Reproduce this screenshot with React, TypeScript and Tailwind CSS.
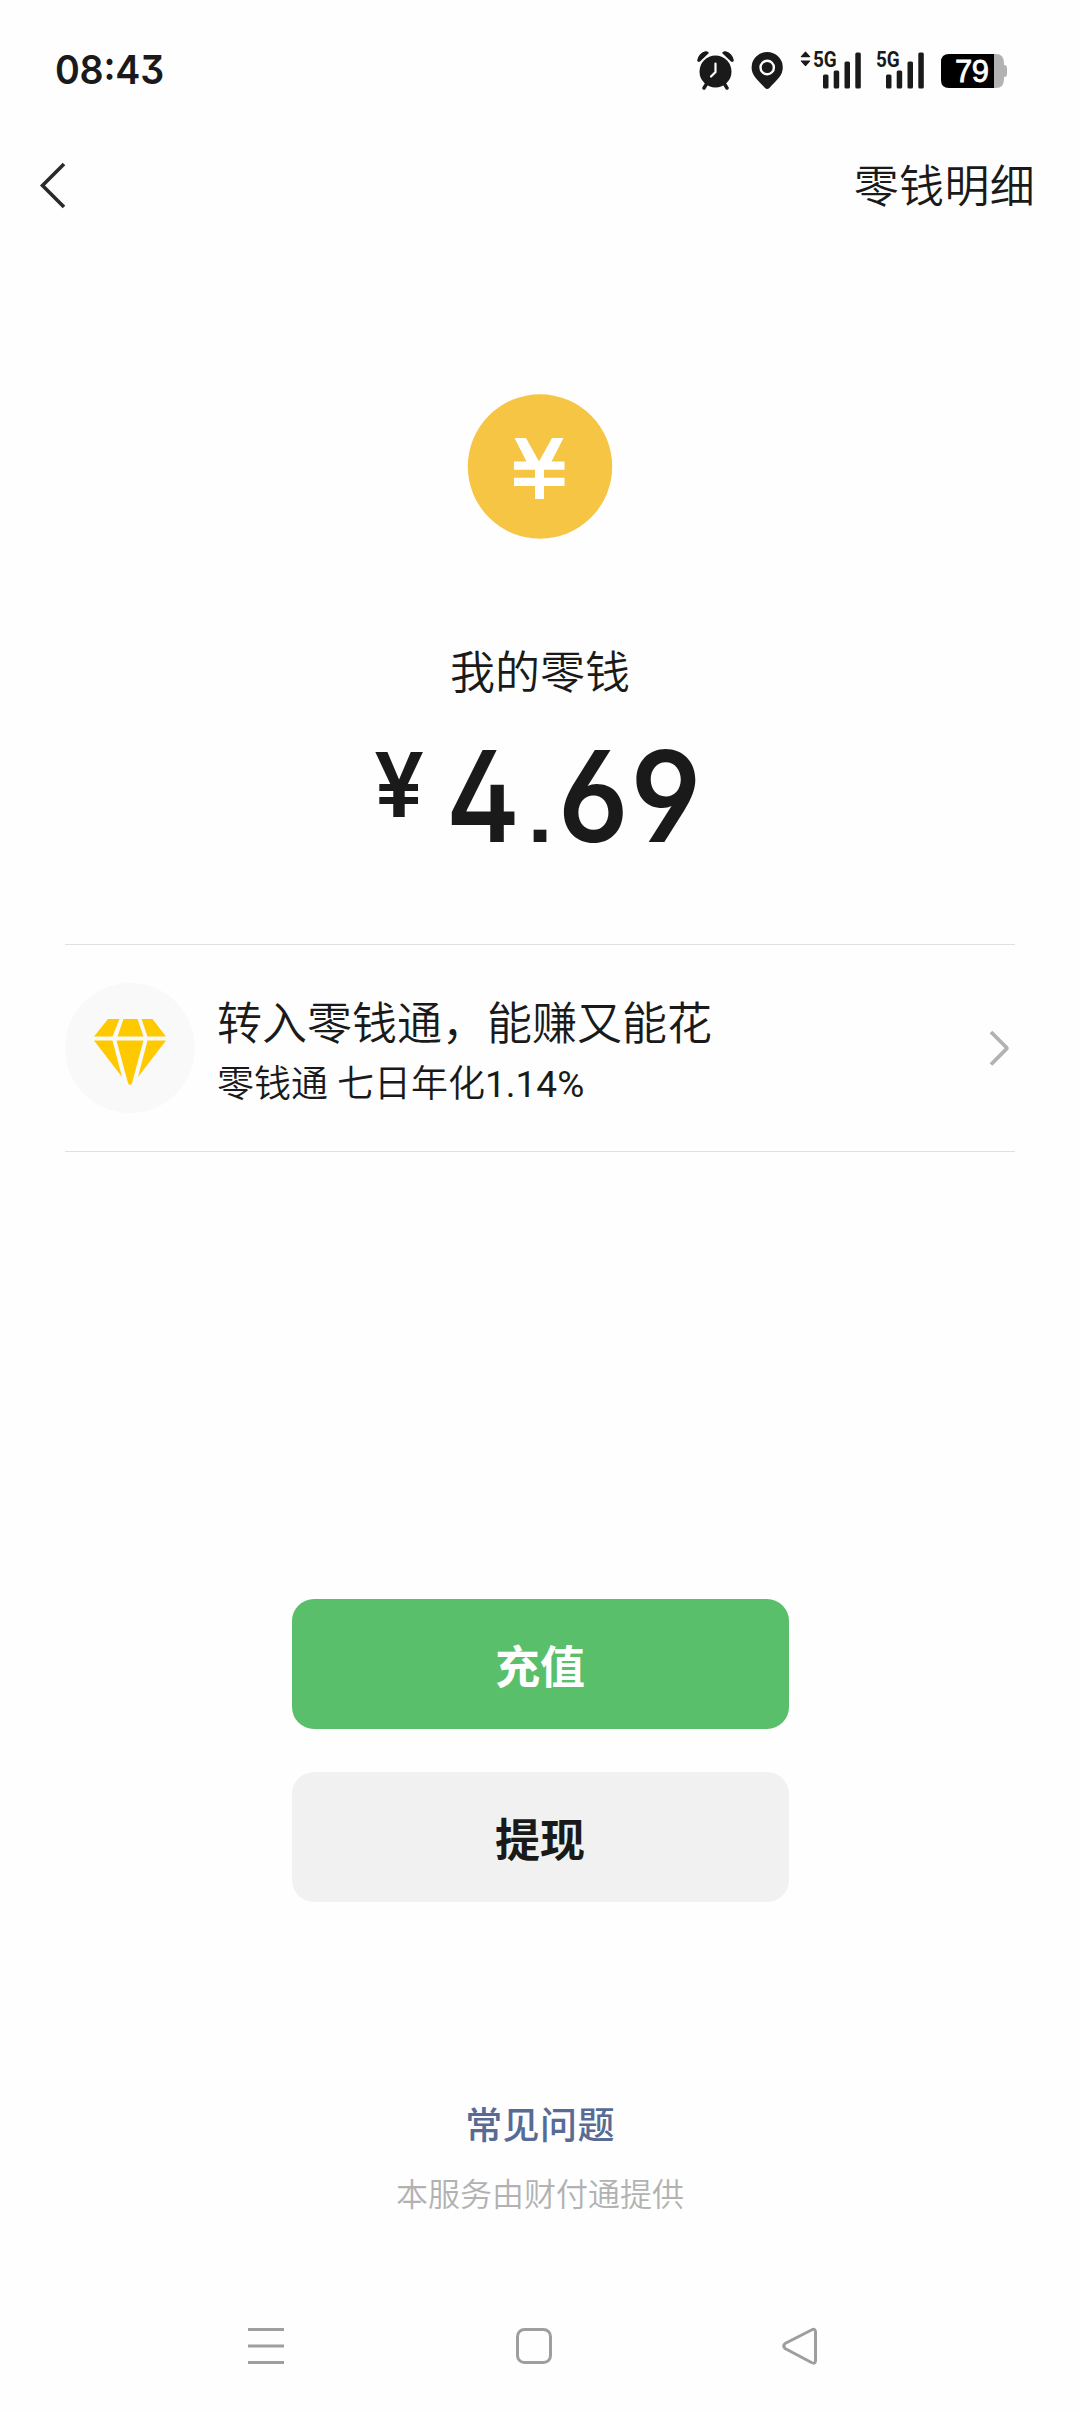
function SignalBars() {
  return (
    <svg width="38" height="37" viewBox="0 0 38 37" fill="#1a1a1a">
      <rect x="0" y="22.5" width="5.5" height="14" rx="1.5" />
      <rect x="10.7" y="18.5" width="5.5" height="18" rx="1.5" />
      <rect x="21.5" y="9.5" width="5.5" height="27" rx="1.5" />
      <rect x="32.3" y="0.5" width="5.5" height="36" rx="1.5" />
    </svg>
  )
}

function StatusBar() {
  return (
    <header className="h-[140px] pl-[55px] pr-[73px] flex justify-between items-start">
      <span className="mt-[45px] leading-[50px] text-[40px] font-semibold tracking-[-0.2px] origin-left scale-x-[.94] font-['Inter',sans-serif] [font-feature-settings:'cv09','case']">
        08:43
      </span>

      <div className="mt-[51px] h-[38px] flex items-start">
        <svg width="37" height="39" viewBox="0 0 37 39" fill="#1a1a1a">
          <circle cx="18.5" cy="20.5" r="16" />
          <path d="M1.2 9.3C2 5.5 4.5 2.5 8.5 1.2q1.400-.2 2.200.7L2.600 9.600q-1.200.7-1.400-.3zM35.800 9.300C35 5.500 32.500 2.500 28.500 1.200q-1.400-.2-2.200.7l8.100 7.700q1.200.7 1.400-.3z" stroke="#1a1a1a" strokeWidth="2" strokeLinejoin="round" />
          <path d="M9.500 33l-2.500 4M27.500 33l2.500 4" stroke="#1a1a1a" strokeWidth="3.400" strokeLinecap="round" />
          <path d="M18.500 12.500v8.500l-4.500 4.500" fill="none" stroke="#fefefe" strokeWidth="2.200" strokeLinecap="round" />
        </svg>
        <svg className="ml-[17px] mt-[1px]" width="33" height="38" viewBox="0 0 33 38">
          <path d="M16.200 0A15.600 15.600 0 0 0 .6 15.600c0 8 6 12.500 13.400 20.300q2.200 2 4.400 0C25.800 28.100 31.800 23.600 31.800 15.600A15.600 15.600 0 0 0 16.200 0z" fill="#1a1a1a" />
          <circle cx="16.200" cy="15.500" r="6.700" fill="none" stroke="#fefefe" strokeWidth="2.400" />
        </svg>
        <svg className="ml-[16px]" width="11" height="16" viewBox="0 0 11 16" fill="#1a1a1a">
          <path d="M4.600 1.200q.9-1.200 1.800 0L10.200 5.500q.4.800-.5.800H1.300q-.9 0-.5-.8zM4.600 14.500q.9 1.200 1.800 0l3.800-4.300q.4-.8-.5-.8H1.300q-.9 0-.5.800z" />
        </svg>
        <div className="relative ml-[12px] mt-[1px]">
          <SignalBars />
          <span className="absolute -left-[10px] -top-[3px] leading-[22px] text-[22px] font-bold origin-left scale-x-[.86] font-['Roboto',sans-serif]">
            5G
          </span>
        </div>
        <div className="relative ml-[25px] mt-[1px]">
          <SignalBars />
          <span className="absolute -left-[10px] -top-[3px] leading-[22px] text-[22px] font-bold origin-left scale-x-[.86] font-['Roboto',sans-serif]">
            5G
          </span>
        </div>
        <div className="relative ml-[17px] mt-[3px]">
          <svg width="66" height="34" viewBox="0 0 66 34">
            <path d="M53 0h2q8 0 8 9v2q3 0 3 3v6q0 3-3 3v2q0 9-8 9h-2z" fill="#b2b2b2" />
            <path d="M8 0h45v34H8q-8 0-8-8V8Q0 0 8 0z" fill="#000" />
          </svg>
          <span className="absolute left-[14px] top-[2px] leading-[32px] text-[31px] tracking-[-0.5px] text-white [-webkit-text-stroke:0.8px_white] font-['Liberation_Sans',sans-serif]">
            79
          </span>
        </div>
      </div>
    </header>
  )
}

function TitleBar() {
  return (
    <nav className="h-[90px] pl-[39px] pr-[45px] flex items-center justify-between">
      <svg width="28" height="48" viewBox="0 0 28 48" fill="none" stroke="#2a2a2a" strokeWidth="3.600">
        <path d="M25 3L3.500 24.500 25 46" />
      </svg>
      <span className="pt-[5px] text-[45px] tracking-[0.3px]">零钱明细</span>
    </nav>
  )
}

function Balance() {
  return (
    <section className="flex flex-col items-center pt-[164px]">
      <svg className="mr-[1px]" width="146" height="146" viewBox="0 0 146 146">
        <circle cx="73" cy="72.500" r="72.200" fill="#f6c544" />
        <path d="M47.500 44h11.500l13 23.500L85 44h11.500L84.500 67.500h13v8.200H77v8h20.500v8.400H77V105h-9V92.100H47V83.700h21v-8H47v-8.200h12.500z" fill="#fff" />
      </svg>
      <h1 className="mt-[101px] leading-[66px] text-[45px]">我的零钱</h1>
      <div className="w-full pl-[374px] flex items-start h-[121px] mt-[26px] font-semibold font-['Inter',sans-serif] [font-feature-settings:'ss01','ss07']">
        <span className="w-[72px] mt-[2px] leading-[100px] text-[89px]">¥</span>
        <div className="flex items-baseline leading-[126px] text-[126px]">
          <span className="w-[80px] origin-left scale-x-[.88]">4</span>
          <span className="w-[32px] text-[88px]">.</span>
          <span className="tracking-[5.5px] origin-left scale-x-[.93]">69</span>
        </div>
      </div>
    </section>
  )
}

function FundRow() {
  return (
    <section className="mx-[65px] mt-[90px] h-[208px] border-y border-[#e0e0e0] flex items-center">
      <div className="size-[130px] rounded-full bg-[#f9f9f9] flex items-center justify-center">
        <svg className="mt-[7px]" width="72" height="66" viewBox="0 0 72 66" fill="#ffc900">
          <path d="M14 0h11.500L18.500 17.500H0zM29.500 0h14l6 17.500h-26zM47.500 0h11L72 17.500H53.500zM0 21.500h18.500L28 58zM22.500 21.500h27L38 64q-2 4-4 0zM53.500 21.500H72L44 58z" />
        </svg>
      </div>
      <div className="ml-[22px] pt-[8px] flex-1">
        <p className="leading-[66px] text-[45px]">转入零钱通，能赚又能花</p>
        <p className="leading-[54px] text-[37px]">
          零钱通 七日年化<span className="font-normal">1.14%</span>
        </p>
      </div>
      <svg className="mr-[5px]" width="22" height="36" viewBox="0 0 22 36" fill="none" stroke="#b2b2b2" strokeWidth="3.800">
        <path d="M3 2l15.500 15.500q.7.700 0 1.400L3 34.500" />
      </svg>
    </section>
  )
}

function Actions() {
  return (
    <section className="mt-[447px] flex flex-col items-center gap-[43px] text-[45px] font-bold">
      <button className="w-[497px] h-[130px] pt-[9px] rounded-[22px] bg-[#5abf6b] text-white">充值</button>
      <button className="w-[497px] h-[130px] pt-[9px] rounded-[22px] bg-[#f1f1f1]">提现</button>
    </section>
  )
}

function NavigationBar() {
  return (
    <nav className="mt-[59px] h-[132px]">
      <svg width="1080" height="132" viewBox="0 2280 1080 132" fill="none" stroke="#9e9e9e" strokeWidth="3" strokeLinejoin="round">
        <path d="M248 2329.500h36M248 2346h36M248 2362.500h36" />
        <rect x="517.500" y="2329.500" width="33" height="33" rx="7" />
        <path d="M785 2343.500L811.500 2330q4-2 4 2v28.500q0 4-4 2L785 2348.500q-2.500-2.500 0-5z" />
      </svg>
    </nav>
  )
}

export default function App() {
  return (
    <main className="w-[1080px] h-[2412px] overflow-hidden bg-[#fefefe] text-[#1a1a1a] font-['Roboto','Noto_Sans_CJK_SC',sans-serif] font-[350]">
      <StatusBar />
      <TitleBar />
      <Balance />
      <FundRow />
      <Actions />
      <footer className="mt-[198px] h-[121px] flex flex-col items-center">
        <a className="leading-[54px] text-[37px] font-medium tracking-[0.4px] text-[#576b95]">常见问题</a>
        <p className="mt-[18px] leading-[46px] text-[32px] text-[#b2b2b2]">本服务由财付通提供</p>
      </footer>
      <NavigationBar />
    </main>
  )
}
